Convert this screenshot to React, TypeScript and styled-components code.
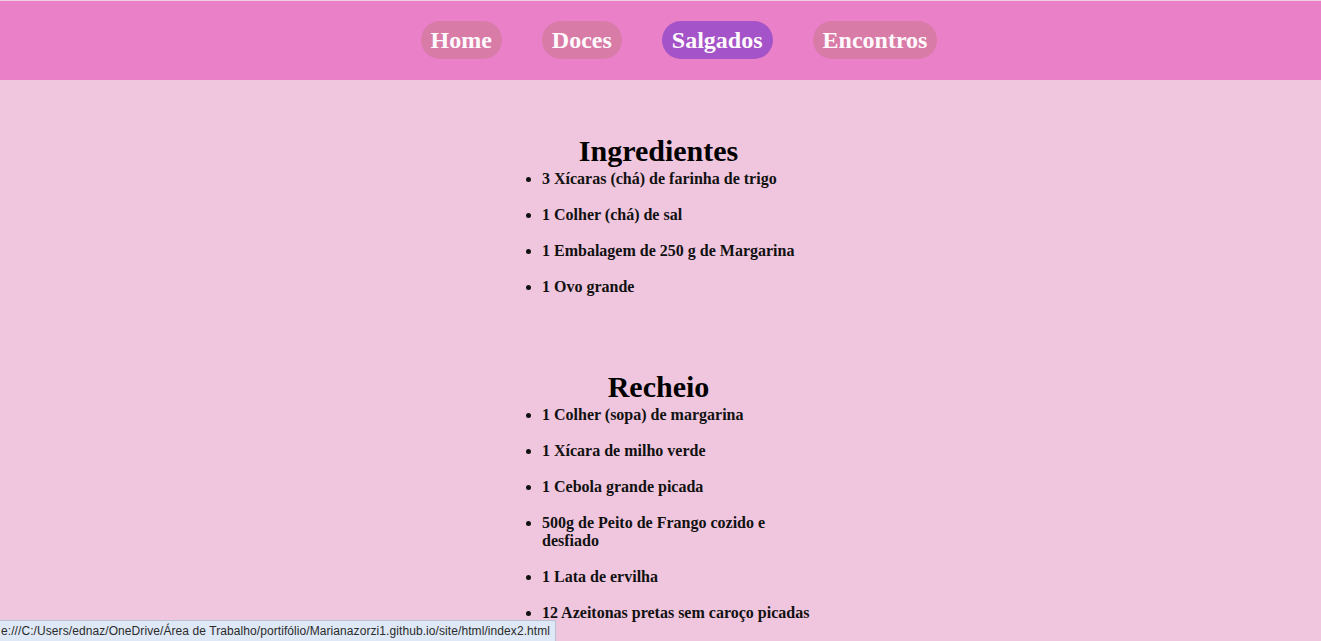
import React from "react";
import styled, { createGlobalStyle } from "styled-components";

const GlobalStyle = createGlobalStyle`
  html, body {
    margin: 0;
    padding: 0;
    background: #f0c6de;
    font-family: "Liberation Serif", "Times New Roman", serif;
  }
`;

const Header = styled.header`
  border-top: 1px solid #f3cfe4;
  height: 80px;
  box-sizing: border-box;
  padding-bottom: 1px;
  background: #ea80c8;
  display: flex;
  align-items: center;
  justify-content: center;
  gap: 40px;
  padding-left: 37px;
`;

const NavLink = styled.a<{ $active?: boolean }>`
  display: block;
  padding: 5px 10px;
  line-height: 28px;
  border-radius: 19px;
  font-size: 24px;
  font-weight: bold;
  color: #fffafd;
  text-decoration: none;
  background: ${(p) => (p.$active ? "#a553c8" : "#d97ba7")};
`;

const Main = styled.main`
  display: flex;
  flex-direction: column;
  align-items: center;
  padding: 54px 4px 40px 0;
  gap: 74px;
`;

const Section = styled.section`
  width: 313px;
`;

const Title = styled.h2`
  margin: 0;
  text-align: center;
  font-size: 30px;
  line-height: 34px;
  font-weight: bold;
  color: #000;
`;

const List = styled.ul`
  margin: 0;
  padding: 2px 0 0 40px;
  list-style: disc;
`;

const Item = styled.li`
  font-size: 16px;
  line-height: 18px;
  font-weight: bold;
  color: #111;
  & + & {
    margin-top: 18px;
  }
`;

const StatusBar = styled.div`
  position: fixed;
  left: 0;
  bottom: 0;
  height: 21px;
  width: 556px;
  box-sizing: border-box;
  background: #dee8f6;
  border: 1px solid #b7c3d1;
  border-left: none;
  border-bottom: none;
  font-family: "Liberation Sans", Arial, sans-serif;
  font-size: 12px;
  letter-spacing: 0.08px;
  line-height: 20px;
  color: #2b2b2b;
  padding-left: 1px;
  white-space: nowrap;
  overflow: hidden;
`;

const ingredientes = [
  "3 Xícaras (chá) de farinha de trigo",
  "1 Colher (chá) de sal",
  "1 Embalagem de 250 g de Margarina",
  "1 Ovo grande",
];

const recheio = [
  "1 Colher (sopa) de margarina",
  "1 Xícara de milho verde",
  "1 Cebola grande picada",
  "500g de Peito de Frango cozido e desfiado",
  "1 Lata de ervilha",
  "12 Azeitonas pretas sem caroço picadas",
];

export default function App() {
  return (
    <>
      <GlobalStyle />
      <Header>
        <NavLink href="#">Home</NavLink>
        <NavLink href="#">Doces</NavLink>
        <NavLink href="#" $active>
          Salgados
        </NavLink>
        <NavLink href="#">Encontros</NavLink>
      </Header>
      <Main>
        <Section>
          <Title>Ingredientes</Title>
          <List>
            {ingredientes.map((t) => (
              <Item key={t}>{t}</Item>
            ))}
          </List>
        </Section>
        <Section>
          <Title>Recheio</Title>
          <List>
            {recheio.map((t) => (
              <Item key={t}>{t}</Item>
            ))}
          </List>
        </Section>
      </Main>
      <StatusBar>
        e:///C:/Users/ednaz/OneDrive/Área de Trabalho/portifólio/Marianazorzi1.github.io/site/html/index2.html
      </StatusBar>
    </>
  );
}
